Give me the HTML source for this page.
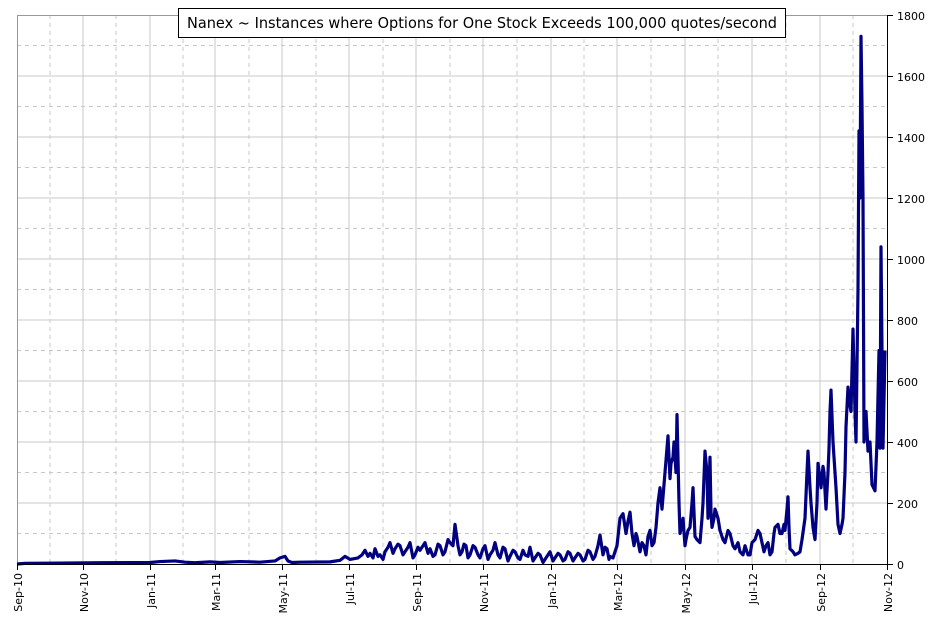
<!DOCTYPE html>
<html><head><meta charset="utf-8"><style>
html,body{margin:0;padding:0;background:#fff;}
svg{display:block;font-family:"DejaVu Sans","Liberation Sans",sans-serif;}
</style></head><body>
<svg width="934" height="629" viewBox="0 0 934 629" xmlns="http://www.w3.org/2000/svg">
<rect width="934" height="629" fill="#fff"/>
<g stroke="#c8c8c8" stroke-width="1" fill="none">
<g stroke-dasharray="4,4">
<line x1="50" y1="15" x2="50" y2="564"/><line x1="116" y1="15" x2="116" y2="564"/><line x1="183" y1="15" x2="183" y2="564"/><line x1="249" y1="15" x2="249" y2="564"/><line x1="316" y1="15" x2="316" y2="564"/><line x1="383" y1="15" x2="383" y2="564"/><line x1="450" y1="15" x2="450" y2="564"/><line x1="517" y1="15" x2="517" y2="564"/><line x1="584" y1="15" x2="584" y2="564"/><line x1="651" y1="15" x2="651" y2="564"/><line x1="718" y1="15" x2="718" y2="564"/><line x1="786" y1="15" x2="786" y2="564"/><line x1="853" y1="15" x2="853" y2="564"/>
<line x1="17" y1="533.5" x2="887" y2="533.5"/><line x1="17" y1="472.5" x2="887" y2="472.5"/><line x1="17" y1="411.5" x2="887" y2="411.5"/><line x1="17" y1="350.5" x2="887" y2="350.5"/><line x1="17" y1="289.5" x2="887" y2="289.5"/><line x1="17" y1="228.5" x2="887" y2="228.5"/><line x1="17" y1="167.5" x2="887" y2="167.5"/><line x1="17" y1="106.5" x2="887" y2="106.5"/><line x1="17" y1="45.5" x2="887" y2="45.5"/>
</g>
<line x1="83" y1="15" x2="83" y2="564"/><line x1="150" y1="15" x2="150" y2="564"/><line x1="215" y1="15" x2="215" y2="564"/><line x1="282" y1="15" x2="282" y2="564"/><line x1="349" y1="15" x2="349" y2="564"/><line x1="416" y1="15" x2="416" y2="564"/><line x1="483" y1="15" x2="483" y2="564"/><line x1="551" y1="15" x2="551" y2="564"/><line x1="617" y1="15" x2="617" y2="564"/><line x1="685" y1="15" x2="685" y2="564"/><line x1="752" y1="15" x2="752" y2="564"/><line x1="820" y1="15" x2="820" y2="564"/>
<line x1="17" y1="503" x2="887" y2="503"/><line x1="17" y1="442" x2="887" y2="442"/><line x1="17" y1="381" x2="887" y2="381"/><line x1="17" y1="320" x2="887" y2="320"/><line x1="17" y1="259" x2="887" y2="259"/><line x1="17" y1="198" x2="887" y2="198"/><line x1="17" y1="137" x2="887" y2="137"/><line x1="17" y1="76" x2="887" y2="76"/>
<line x1="17" y1="15.5" x2="887" y2="15.5" stroke="#999"/>
<line x1="17.5" y1="15" x2="17.5" y2="564" stroke="#999"/>
</g>
<g transform="translate(0,564) scale(1,-0.305)">
<polyline fill="none" stroke="#000080" stroke-width="3.2" vector-effect="non-scaling-stroke" stroke-linejoin="round" points="17,0 25,2 60,3 100,4 150,5 160,8 175,10 185,6 195,4 210,7 220,5 240,8 260,6 275,10 280,20 285,25 288,10 292,5 300,6 330,7 340,12 345,25 350,15 358,20 362,30 365,45 368,25 370,35 373,20 375,50 378,25 380,30 383,15 385,40 388,55 390,70 393,35 395,50 398,65 400,60 403,30 405,40 408,55 410,70 413,20 415,30 418,55 420,45 423,60 425,70 428,35 430,50 433,25 435,30 438,65 440,60 443,30 445,40 448,80 450,70 453,60 455,130 458,60 460,30 462,40 464,65 466,60 468,20 470,30 473,60 475,55 478,30 480,20 483,50 485,60 488,15 490,30 493,45 495,70 498,30 500,20 503,55 505,50 508,10 510,25 513,45 515,40 518,20 520,15 523,45 525,30 528,25 530,55 533,10 535,20 538,35 540,30 543,5 545,15 548,30 550,40 553,10 555,20 558,35 560,30 563,10 565,15 568,40 570,35 573,10 575,20 578,35 580,30 583,10 585,15 588,45 590,40 593,15 595,25 598,60 600,95 603,30 605,55 607,50 609,15 610,25 613,20 615,40 617,60 620,150 623,165 626,100 628,140 630,170 632,100 634,60 636,100 637,90 640,40 642,70 644,60 646,30 648,90 650,110 652,60 654,70 656,120 658,200 660,250 662,180 664,260 665,300 667,380 668,420 670,280 671,330 673,350 674,400 676,300 677,490 679,200 680,100 682,130 683,150 685,60 686,80 688,110 690,120 692,200 693,250 695,90 697,80 700,70 702,150 703,200 705,370 707,300 708,150 709,250 710,350 711,170 712,120 714,150 715,180 718,150 720,110 721,100 723,80 725,70 728,110 730,100 733,60 735,50 738,70 740,40 743,30 745,60 748,30 750,30 752,70 755,80 758,110 760,100 762,70 764,40 766,60 768,70 770,30 772,40 774,100 775,120 778,130 780,100 782,100 784,130 785,110 787,180 788,220 789,120 790,50 793,40 795,30 798,35 800,40 802,80 805,150 807,300 808,370 810,250 811,200 813,120 815,80 817,200 818,330 820,280 821,250 823,320 824,300 826,180 828,300 829,380 830,500 831,570 833,400 835,300 836,250 838,130 840,100 842,130 843,150 845,300 846,450 848,580 850,520 851,500 853,770 855,500 856,400 858,900 859,1420 860,1200 861,1730 862,1500 863,1200 864,400 866,500 868,370 870,400 872,260 875,240 877,400 879,700 880,380 881,1040 882,700 883,380 885,700"/>
</g>
<g stroke="#000" stroke-width="1">
<line x1="17" y1="564.5" x2="888" y2="564.5"/>
<line x1="887.5" y1="15" x2="887.5" y2="565"/>
</g>
<g stroke="#000" stroke-width="1">
<line x1="887" y1="15.5" x2="893" y2="15.5"/><line x1="887" y1="76.5" x2="893" y2="76.5"/><line x1="887" y1="137.5" x2="893" y2="137.5"/><line x1="887" y1="198.5" x2="893" y2="198.5"/><line x1="887" y1="259.5" x2="893" y2="259.5"/><line x1="887" y1="320.5" x2="893" y2="320.5"/><line x1="887" y1="381.5" x2="893" y2="381.5"/><line x1="887" y1="442.5" x2="893" y2="442.5"/><line x1="887" y1="503.5" x2="893" y2="503.5"/><line x1="887" y1="564.5" x2="893" y2="564.5"/>
<line x1="17.5" y1="564" x2="17.5" y2="570"/><line x1="83.5" y1="564" x2="83.5" y2="570"/><line x1="150.5" y1="564" x2="150.5" y2="570"/><line x1="215.5" y1="564" x2="215.5" y2="570"/><line x1="282.5" y1="564" x2="282.5" y2="570"/><line x1="349.5" y1="564" x2="349.5" y2="570"/><line x1="416.5" y1="564" x2="416.5" y2="570"/><line x1="483.5" y1="564" x2="483.5" y2="570"/><line x1="551.5" y1="564" x2="551.5" y2="570"/><line x1="617.5" y1="564" x2="617.5" y2="570"/><line x1="685.5" y1="564" x2="685.5" y2="570"/><line x1="752.5" y1="564" x2="752.5" y2="570"/><line x1="820.5" y1="564" x2="820.5" y2="570"/><line x1="887.5" y1="564" x2="887.5" y2="570"/>
</g>
<g font-size="11" fill="#000">
<text x="897" y="20">1800</text><text x="897" y="81">1600</text><text x="897" y="142">1400</text><text x="897" y="203">1200</text><text x="897" y="264">1000</text><text x="897" y="325">800</text><text x="897" y="386">600</text><text x="897" y="447">400</text><text x="897" y="508">200</text><text x="897" y="569">0</text>
</g>
<g font-size="11" fill="#000" text-anchor="end">
<text transform="translate(22,573) rotate(-90)">Sep-10</text>
<text transform="translate(88,573) rotate(-90)">Nov-10</text>
<text transform="translate(155,573) rotate(-90)">Jan-11</text>
<text transform="translate(220,573) rotate(-90)">Mar-11</text>
<text transform="translate(287,573) rotate(-90)">May-11</text>
<text transform="translate(354,573) rotate(-90)">Jul-11</text>
<text transform="translate(421,573) rotate(-90)">Sep-11</text>
<text transform="translate(488,573) rotate(-90)">Nov-11</text>
<text transform="translate(556,573) rotate(-90)">Jan-12</text>
<text transform="translate(622,573) rotate(-90)">Mar-12</text>
<text transform="translate(690,573) rotate(-90)">May-12</text>
<text transform="translate(757,573) rotate(-90)">Jul-12</text>
<text transform="translate(825,573) rotate(-90)">Sep-12</text>
<text transform="translate(892,573) rotate(-90)">Nov-12</text>
</g>
<rect x="178.5" y="8.5" width="607" height="29" fill="#fff" stroke="#000"/>
<text x="482" y="28" font-size="15" text-anchor="middle" fill="#000" textLength="590" lengthAdjust="spacingAndGlyphs">Nanex ~ Instances where Options for One Stock Exceeds 100,000 quotes/second</text>
</svg>
</body></html>
